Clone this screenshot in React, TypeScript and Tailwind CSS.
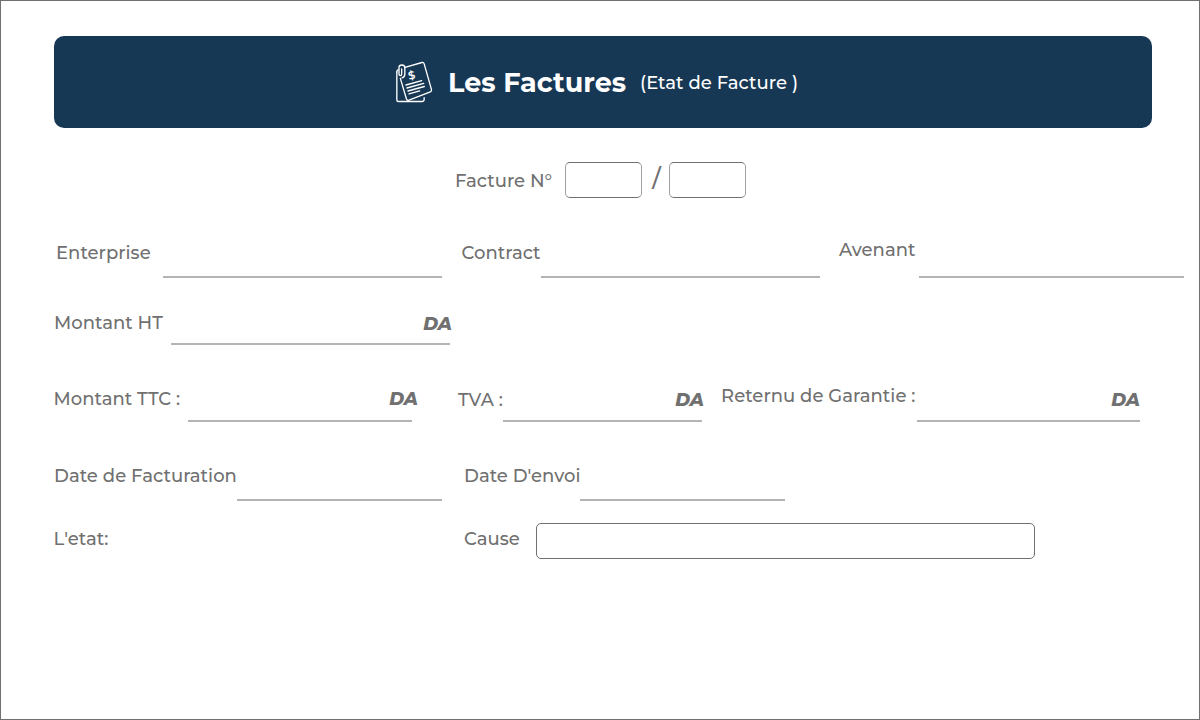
import type { ReactNode } from "react";

function InvoiceIcon() {
  return (
    <svg
      width="40"
      height="42"
      viewBox="30 27 120 126"
      fill="none"
      stroke="#ffffff"
      strokeWidth="4"
      strokeLinecap="round"
      strokeLinejoin="round"
      aria-hidden="true"
    >
      <path d="M35.500 60V143Q35.500 148.500 41 148.500H111Q117.500 148.500 117.500 142V137" />
      <path d="M60 46L111 31.500Q116 30.500 117.500 35.500L139.500 113Q140.500 118 136 119.500L72 144.500Q66.500 146.500 64.500 141L46 79" />
      <path d="M50 51V66Q50 71 46 71T42 66V46Q42 39 50.500 39T59.500 47V66Q59.500 76 51 77.500" />
      <path d="M35.500 60Q35.500 54 40 53" />
      <path d="M63 99L110 86M66 108L116 94M69 117L118 103.500M72 125.500L104 116.500" />
      <text
        x="80"
        y="81"
        transform="rotate(-12 80 70)"
        textAnchor="middle"
        fill="#ffffff"
        stroke="none"
        className="font-['Montserrat','Inter',sans-serif] text-[33px] font-semibold"
      >
        $
      </text>
    </svg>
  );
}

function Label({ className, children }: { className: string; children: ReactNode }) {
  return <label className={`shrink-0 whitespace-nowrap leading-6 tracking-[0.04px] ${className}`}>{children}</label>;
}

function Line({ className, unit }: { className: string; unit?: string }) {
  return (
    <div className={`flex shrink-0 items-start border-b-2 border-[#b4b4b4] ${className}`}>
      <input className="h-full min-w-0 flex-1 bg-transparent outline-none" />
      {unit && <span className="leading-6 font-extrabold italic">{unit}</span>}
    </div>
  );
}

const box = "h-9 shrink-0 rounded-[5px] border border-[#707070] bg-white outline-none";

export default function App() {
  return (
    <main className="h-[720px] w-[1200px] overflow-hidden border border-[#707070] bg-white pt-[35px] font-['Montserrat','Inter',sans-serif] text-[18px] font-medium text-[#707070]">
      <header className="ml-[53px] flex h-[92px] w-[1098px] items-center rounded-[10px] bg-[#173855] pl-[341px] text-white">
        <InvoiceIcon />
        <h1 className="ml-[13px] pt-0.5 whitespace-nowrap text-[27px] leading-8 font-bold">Les Factures</h1>
        <p className="ml-[14px] pt-0.5 whitespace-nowrap leading-6 tracking-[0.04px]">(Etat de Facture )</p>
      </header>

      <form>
        <div className="mt-[34px] flex h-9 items-start pl-[454px]">
          <Label className="mt-[7px] w-[110px] tracking-normal">Facture N°</Label>
          <input className={`${box} w-[77px] border-x-[#a0a0a0]`} />
          <span className="flex w-[27px] justify-center pl-0.5 text-[24px] leading-[34px]">/</span>
          <input className={`${box} w-[77px] border-x-[#a0a0a0]`} />
        </div>

        <div className="mt-10 flex h-10 items-end pl-[55px]">
          <Label className="mb-[13px] w-[107px]">Enterprise</Label>
          <Line className="h-[38px] w-[279px]" />
          <Label className="mb-[13px] ml-[19px] w-20 pl-[0.5px]">Contract</Label>
          <Line className="h-[38px] w-[279px]" />
          <Label className="mb-4 ml-[19px] w-20">Avenant</Label>
          <Line className="h-[38px] w-[265px]" />
        </div>

        <div className="mt-[27px] flex h-10 items-end pl-[53px]">
          <Label className="mb-[10px] w-[117px]">Montant HT</Label>
          <Line className="h-[33px] w-[279px] *:last:-mr-[2px]" unit="DA" />
        </div>

        <div className="mt-[37px] flex h-10 items-end pl-[52px]">
          <Label className="mb-[11px] w-[135px] pl-[0.5px]">Montant TTC :</Label>
          <Line className="h-[35px] w-[224px] *:last:-mr-[6px]" unit="DA" />
          <Label className="mb-[10px] ml-[46px] w-[45px]">TVA :</Label>
          <Line className="h-[34px] w-[199px] *:last:-mr-[2px]" unit="DA" />
          <Label className="mb-[14px] ml-[19px] w-[196px]">Reternu de Garantie :</Label>
          <Line className="h-[34px] w-[223px]" unit="DA" />
        </div>

        <div className="mt-[39px] flex h-10 items-end pl-[53px]">
          <Label className="mb-[13px] w-[183px]">Date de Facturation</Label>
          <Line className="h-[38px] w-[205px]" />
          <Label className="mb-[13px] ml-[22px] w-[116px]">Date D'envoi</Label>
          <Line className="h-[38px] w-[205px]" />
        </div>

        <div className="mt-[22px] flex h-9 items-start pl-[52px]">
          <Label className="mt-[4px] w-[411px] pl-[0.5px]">L'etat:</Label>
          <Label className="mt-[4px] w-[72px]">Cause</Label>
          <input className={`${box} w-[499px]`} />
        </div>
      </form>
    </main>
  );
}
